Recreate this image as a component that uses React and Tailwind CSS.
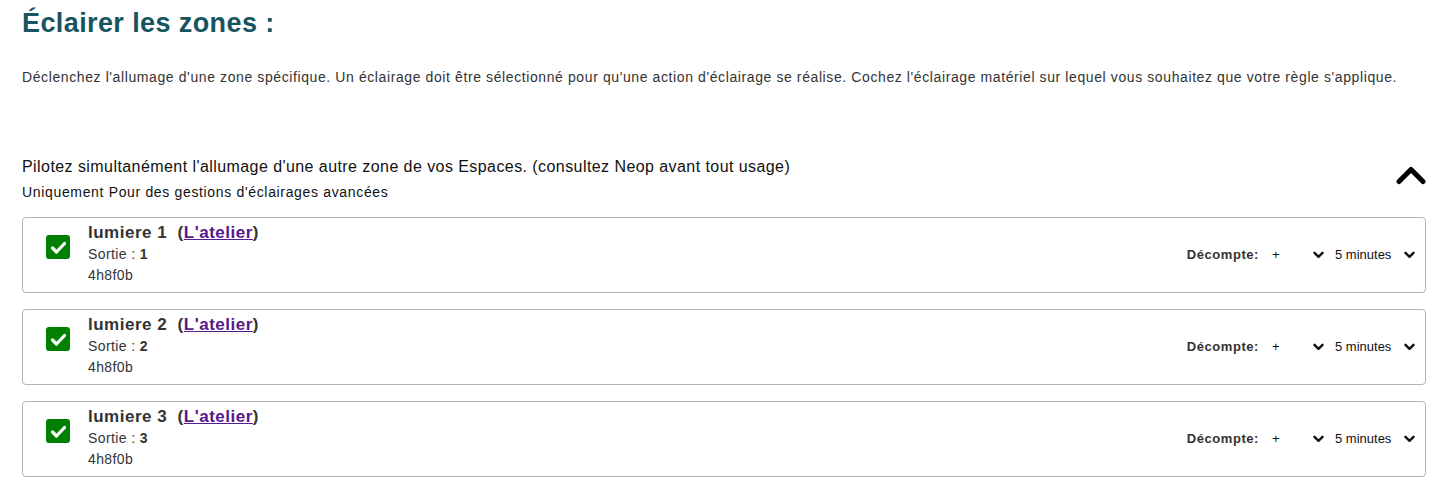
import React from "react";

const lights = [
  { name: "lumiere 1", sortie: "1", code: "4h8f0b" },
  { name: "lumiere 2", sortie: "2", code: "4h8f0b" },
  { name: "lumiere 3", sortie: "3", code: "4h8f0b" },
];

const ChevronDown = () => (
  <svg width="11" height="8" viewBox="0 0 11 8" className="block">
    <polyline
      points="1.5,1.8 5.5,5.8 9.5,1.8"
      fill="none"
      stroke="#111"
      strokeWidth="2.4"
      strokeLinecap="round"
      strokeLinejoin="round"
    />
  </svg>
);

const ChevronUp = () => (
  <svg width="30" height="19" viewBox="0 0 30 19" className="block">
    <polyline
      points="3,15.5 15,3.5 27,15.5"
      fill="none"
      stroke="#000"
      strokeWidth="5"
      strokeLinecap="round"
      strokeLinejoin="round"
    />
  </svg>
);

const Checkbox = () => (
  <div className="w-[24px] h-[24px] rounded-[3px] bg-[#008000] flex items-center justify-center shrink-0">
    <svg width="17" height="15" viewBox="0 0 17 15">
      <polyline
        points="2.5,8 6.5,12 14.5,3.5"
        fill="none"
        stroke="#fff"
        strokeWidth="3.2"
        strokeLinecap="round"
        strokeLinejoin="round"
      />
    </svg>
  </div>
);

const LightCard = ({ light }) => {
  return (
    <div className="border border-[#b3b3b3] rounded-[4px] h-[76px] mb-[16px] flex items-start pl-[23px] pr-[10px]">
      <div className="mt-[17px]">
        <Checkbox />
      </div>
      <div className="ml-[18px] pt-[4px] text-[#333]">
        <p className="text-[17px] leading-[22px] font-bold whitespace-pre tracking-[0.5px]">
          {light.name}  (
          <a href="#" className="text-[#551a8b] underline">
            L'atelier
          </a>
          )
        </p>
        <p className="text-[14px] leading-[21px] tracking-[0.4px]">
          Sortie : <span className="font-bold">{light.sortie}</span>
        </p>
        <p className="text-[14px] leading-[21px] tracking-[0.4px]">{light.code}</p>
      </div>
      <div className="ml-auto self-center flex items-center text-[13px] text-[#111]">
        <span className="font-bold text-[#333] mr-[13px] tracking-[0.55px]">Décompte:</span>
        <div className="flex items-center w-[52px] justify-between">
          <span>+</span>
          <ChevronDown />
        </div>
        <div className="flex items-center ml-[11px] w-[80px] justify-between">
          <span>5 minutes</span>
          <ChevronDown />
        </div>
      </div>
    </div>
  );
};

const App = () => {
  return (
    <div
      className="bg-white min-h-screen px-[22px] pr-[29px]"
      style={{ fontFamily: '"Liberation Sans", Arial, sans-serif' }}
    >
      <h1 className="text-[27px] leading-[30px] font-bold text-[#17545f] pt-[8px] tracking-[0.4px]">
        Éclairer les zones :
      </h1>
      <p className="text-[14px] leading-[20px] text-[#333] mt-[29px] tracking-[0.6px]">
        Déclenchez l'allumage d'une zone spécifique. Un éclairage doit être sélectionné pour qu'une action
        d'éclairage se réalise. Cochez l'éclairage matériel sur lequel vous souhaitez que votre règle
        s'applique.
      </p>
      <div className="flex items-center mt-[69px]">
        <div>
          <p className="text-[16px] leading-[22px] text-[#111] tracking-[0.43px]">
            Pilotez simultanément l'allumage d'une autre zone de vos Espaces. (consultez Neop avant tout usage)
          </p>
          <p className="text-[14px] leading-[20px] text-[#111] mt-[4px] tracking-[0.66px]">
            Uniquement Pour des gestions d'éclairages avancées
          </p>
        </div>
        <div className="ml-auto mb-[8px]">
          <ChevronUp />
        </div>
      </div>
      <div className="mt-[15px]">
        {lights.map((light, index) => (
          <LightCard key={index} light={light} />
        ))}
      </div>
    </div>
  );
};

export default App;
